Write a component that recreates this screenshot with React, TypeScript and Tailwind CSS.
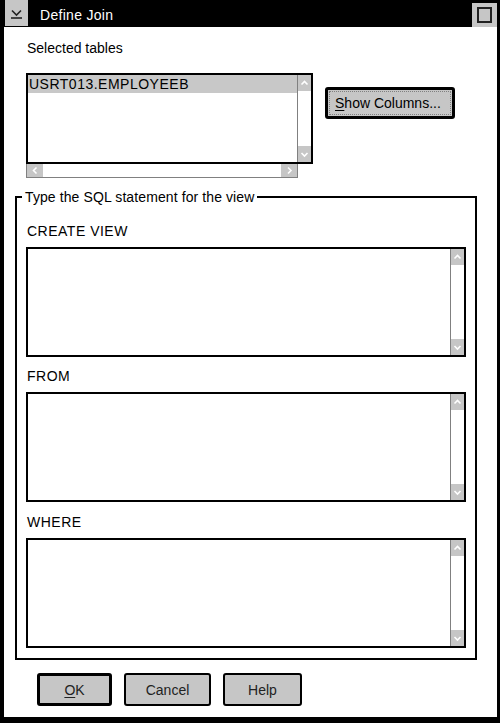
import React from "react";

const chevrons = {
  up: "M1.5 5.5 L4.5 2.5 L7.5 5.5",
  down: "M1.5 3 L4.5 6 L7.5 3",
  left: "M5.5 1.5 L2.5 4.5 L5.5 7.5",
  right: "M3 1.5 L6 4.5 L3 7.5",
};

function Chevron({ dir }: { dir: keyof typeof chevrons }) {
  return (
    <svg width="9" height="9" viewBox="0 0 9 9">
      <path d={chevrons[dir]} fill="none" stroke="white" strokeWidth="1.6" />
    </svg>
  );
}

function VScroll() {
  return (
    <div className="flex w-[14px] flex-col justify-between border-l border-[#808080] bg-white">
      <div className="grid h-[16px] place-items-center bg-[#c6c6c6]">
        <Chevron dir="up" />
      </div>
      <div className="grid h-[16px] place-items-center bg-[#c6c6c6]">
        <Chevron dir="down" />
      </div>
    </div>
  );
}

function SqlBox() {
  return (
    <div className="flex h-[110px] w-[440px] border-2 border-black">
      <div className="flex-1 bg-white" />
      <VScroll />
    </div>
  );
}

function PushButton({
  width,
  thick,
  children,
}: {
  width: string;
  thick?: boolean;
  children: React.ReactNode;
}) {
  return (
    <button
      className={
        (thick ? "border-[3px] " : "border-2 ") +
        width +
        " h-[33px] rounded-[3px] border-black bg-[#c6c6c6] text-center text-[#222]"
      }
    >
      {children}
    </button>
  );
}

export default function App() {
  return (
    <div className="flex h-[723px] w-[500px] flex-col bg-black pb-[6px] pl-[4px] pr-[3px] font-['Liberation_Sans',Arial,sans-serif] text-[14px] leading-[16px] text-black">
      {/* title bar */}
      <div className="flex h-[27px] items-start">
        <div className="ml-[1px] h-[26px] w-[23px] bg-[#c6c6c6]">
          <svg width="23" height="26" viewBox="0 0 23 26">
            <path d="M7 10.5 L11.5 15 L16 10.5" fill="none" stroke="#222" strokeWidth="1.6" />
            <path d="M6 18 H17" stroke="#222" strokeWidth="1.6" />
          </svg>
        </div>
        <div className="ml-[12px] mt-[7px] tracking-[0.3px] text-white">Define Join</div>
        <div className="ml-auto mt-[3px] grid h-[24px] w-[25px] place-items-center bg-[#c6c6c6]">
          <div className="h-[16px] w-[15px] border-2 border-[#222]" />
        </div>
      </div>

      {/* client area */}
      <div className="flex flex-1 flex-col bg-white">
        <div className="ml-[23px] mt-[13px]">Selected tables</div>

        <div className="ml-[22px] mt-[17px] flex items-start">
          <div className="w-[287px]">
            <div className="flex h-[91px] border-2 border-black">
              <div className="flex-1 bg-white">
                <div className="h-[18px] bg-[#c8c8c8] pl-[1px] leading-[18px] tracking-[0.5px]">
                  USRT013.EMPLOYEEB
                </div>
              </div>
              <VScroll />
            </div>
            <div className="flex h-[14px] w-[272px] justify-between border border-t-0 border-[#808080] bg-white">
              <div className="grid w-[16px] place-items-center bg-[#c6c6c6]">
                <Chevron dir="left" />
              </div>
              <div className="grid w-[16px] place-items-center bg-[#c6c6c6]">
                <Chevron dir="right" />
              </div>
            </div>
          </div>

          <button className="ml-[12px] mt-[14px] h-[32px] w-[130px] rounded-[3px] border-[3px] border-black bg-[#c6c6c6] p-[1px]">
            <div className="flex h-full items-center border border-dotted border-[#808080] px-[5px]">
              <span>
                <span className="underline underline-offset-2">S</span>how Columns...
              </span>
            </div>
          </button>
        </div>

        <fieldset className="ml-[11px] mt-[11px] w-[462px] border-2 border-black px-[9px] pb-[10px]">
          <legend className="-ml-[4px] px-[3px] tracking-[0.1px]">Type the SQL statement for the view</legend>
          <div className="ml-[1px] mt-[18px] tracking-[0.5px]">CREATE VIEW</div>
          <div className="mt-[8px]">
            <SqlBox />
          </div>
          <div className="ml-[1px] mt-[11px] tracking-[0.5px]">FROM</div>
          <div className="mt-[8px]">
            <SqlBox />
          </div>
          <div className="ml-[1px] mt-[12px] tracking-[0.5px]">WHERE</div>
          <div className="mt-[8px]">
            <SqlBox />
          </div>
        </fieldset>

        <div className="ml-[33px] mt-[13px] flex gap-[12px]">
          <PushButton width="w-[75px]" thick>
            <span className="underline underline-offset-2">O</span>K
          </PushButton>
          <PushButton width="w-[87px]">Cancel</PushButton>
          <PushButton width="w-[79px]">Help</PushButton>
        </div>
      </div>
    </div>
  );
}
